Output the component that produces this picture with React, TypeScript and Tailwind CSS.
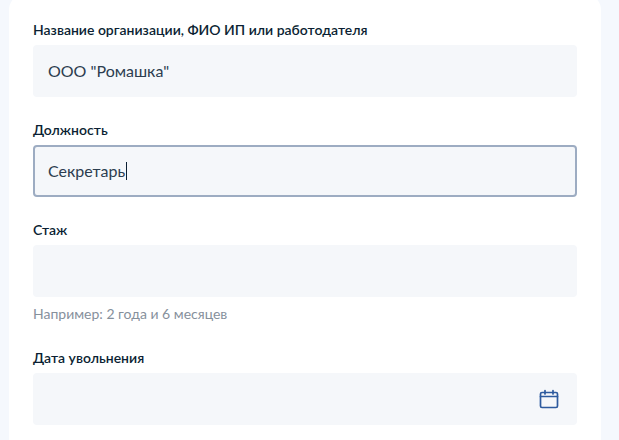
export default function App() {
  const label = "h-[20px] text-[14px] leading-[20px] font-semibold text-[#0b1f33]";
  const field = "h-[52px] mt-[5px] rounded-[4px] bg-[#f5f7fa] flex items-center px-[15px] text-[16px] text-[#2c3d4f]";
  return (
    <div className="w-[619px] h-[440px] overflow-hidden bg-[#f5f8fd] pl-[9px] pr-[18px] font-['Lato','Noto_Sans',sans-serif]">
      <div className="h-[460px] -mt-[6px] bg-white rounded-[16px] px-[24px] pt-[26px]">
        <div className={label}>Название организации, ФИО ИП или работодателя</div>
        <div className={field}>ООО "Ромашка"</div>
        <div className={`${label} mt-[23px]`}>Должность</div>
        <div className={`${field} border-2 border-[#9dacc2]`}>
          <span className="-ml-[2px]">Секретарь</span>
          <span className="ml-[1px] w-px h-[18px] bg-[#0b1f33]"></span>
        </div>
        <div className={`${label} mt-[23px]`}>Стаж</div>
        <div className={field}></div>
        <div className="mt-[7px] h-[20px] text-[14px] leading-[20px] text-[#86909c]">Например: 2 года и 6 месяцев</div>
        <div className={`${label} mt-[24px]`}>Дата увольнения</div>
        <div className={`${field} justify-end pr-[18px]`}>
          <svg width="20" height="20" viewBox="0 0 20 20" fill="none" stroke="#2d5a9e" strokeWidth="1.7" strokeLinecap="round" strokeLinejoin="round">
            <rect x="1.5" y="3.5" width="17" height="15" rx="1.5" />
            <path d="M1.5 7.5h17M6 1.5v3.5M14 1.5v3.5" />
          </svg>
        </div>
      </div>
    </div>
  );
}
